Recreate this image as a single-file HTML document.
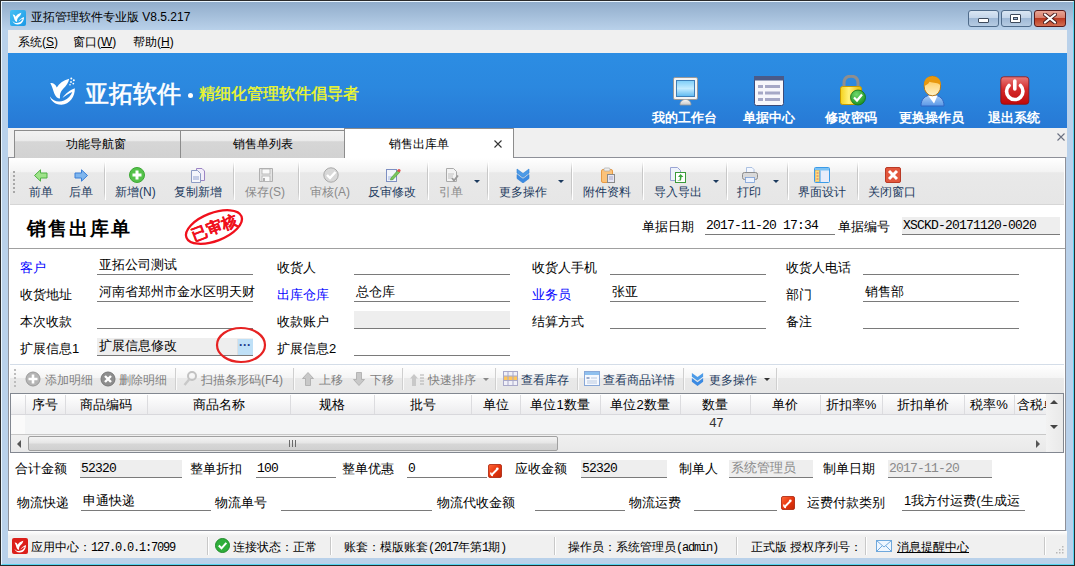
<!DOCTYPE html>
<html><head><meta charset="utf-8">
<style>
*{margin:0;padding:0;box-sizing:border-box}
html,body{width:1075px;height:566px;overflow:hidden;background:#b9d1ea}
body{position:relative;font-family:"Liberation Sans",sans-serif;font-size:12px;color:#000}
.a{position:absolute;white-space:nowrap}
.mono{font-family:"Liberation Mono",monospace;font-size:13px !important;letter-spacing:-0.8px}
/* frame */
#frame{left:0;top:0;width:1075px;height:566px;border:1px solid #2a2a2a;background:#b9d1ea}
#frameIn{left:1px;top:1px;width:1073px;height:564px;border:1px solid #eaf6ff;border-right-color:#55d4f0;border-bottom-color:#55d4f0}
#title{left:2px;top:2px;width:1071px;height:28px;background:linear-gradient(#91adcb,#b9d1ea)}
#menubar{left:8px;top:30px;width:1059px;height:23px;background:#f0f0f0}
#banner{left:8px;top:53px;width:1059px;height:75px;background:linear-gradient(180deg,#2c8de3 0%,#2b88df 45%,#2779d5 100%)}
.wbtn{top:10px;height:17px;border:1px solid #4f6b8a;border-radius:3px;background:linear-gradient(#d9e6f3 0%,#c4d6ea 45%,#9fb9d6 50%,#b6cbe2 100%)}
.wbtn.close{border-color:#5a1a1a;background:linear-gradient(#e8a595 0%,#d9806d 45%,#bb3a22 50%,#d36e52 100%)}
.bnTxt{color:#fff;font-weight:bold;font-size:13px}
#content{left:8px;top:157px;width:1058px;height:374px;background:#fff;border:1px solid #8e9098}
.tab{top:130px;height:28px;border:1px solid #8c8c8c;border-bottom:none;background:linear-gradient(#f2f2f2 0%,#ebebeb 35%,#d6d6d6 40%,#d2d2d2 100%);text-align:center;font-size:12px;line-height:26px;color:#000}

.tb{top:184px;font-size:12px;color:#1c3a5e}
.tb.dis{color:#8a8a8a}
.sep{top:162px;width:1px;height:38px;background:linear-gradient(rgba(200,200,200,0),#c8c8c8 20%,#c8c8c8 80%,rgba(200,200,200,0));box-shadow:1px 0 0 #fff}
.dd{top:180px;width:0;height:0;border-left:3px solid transparent;border-right:3px solid transparent;border-top:3px solid #1c3a5e}
.fld{height:18px;border-bottom:1px solid #7a7a7a;padding-left:2px;font-size:13px;line-height:16px}
.fld.mono{line-height:18px;padding-left:1px}
.fld.gray{background:#eeeeee}
.lbl{font-size:13px}
.blue{color:#0000ff}

.dt{top:372px;font-size:12px;color:#1c3a5e}
.dt.dis{color:#7f7f7f}
.sep2{top:368px;width:1px;height:22px;background:#cfcfcf;box-shadow:1px 0 0 #fafafa}
.gh{top:396px;font-size:13px;text-align:center;line-height:17px}
.gc{top:395px;width:1px;height:19px;background:#dcdcdf}

.st{top:539px;font-size:12px;color:#000}
.sep3{top:537px;width:1px;height:18px;background:#c8c8c8;box-shadow:1px 0 0 #fff}
.mono2{font-family:"Liberation Mono",monospace;font-size:12px;letter-spacing:-1.2px}
</style></head>
<body>
<div class="a" id="frame"></div>
<div class="a" id="frameIn"></div>
<div class="a" id="title"></div>
<!-- title icon -->
<div class="a" style="left:10px;top:10px;width:16px;height:16px;border-radius:2px;background:linear-gradient(135deg,#46c0f4,#1a98e6)"></div>
<svg class="a" style="left:10px;top:10px" width="16" height="16" viewBox="0 0 16 16"><g transform="translate(2.5 1.8) scale(0.46)"><g fill="#fff"><path d="M0.3 6 C3 5.5 5.5 7 6.8 10.5 C9 6.5 13 3.5 19.2 1.8 C18.5 5.5 16.5 9 13 12 C10.5 14.5 9.5 17.5 10 21.5 C7.5 21.5 5.5 19.5 4.3 16.5 C3 13 2 9 0.3 6Z"/><path d="M0 19.5 C3 24.5 9 25.5 14 23.5 C18 22 21 18.5 22.3 15 C19.5 16 15.5 18.5 12.5 21 C15.5 16.5 20.5 12.8 24.8 11.3 C25.3 19.5 19.5 27.6 11.5 27.7 C5 27.8 0.5 23.5 0 19.5Z"/></g></g></svg>
<div class="a" style="left:31px;top:9px;font-size:12px;color:#000">亚拓管理软件专业版 V8.5.217</div>
<div class="a wbtn" style="left:968px;width:31px"></div>
<div class="a wbtn" style="left:1001px;width:31px"></div>
<div class="a wbtn close" style="left:1034px;width:32px"></div>
<div class="a" id="menubar"></div>
<div class="a" style="left:18px;top:34px;font-size:12px">系统(<u>S</u>)</div>
<div class="a" style="left:73px;top:34px;font-size:12px">窗口(<u>W</u>)</div>
<div class="a" style="left:133px;top:34px;font-size:12px">帮助(<u>H</u>)</div>
<div class="a" id="banner"></div>
<div class="a" style="left:85px;top:78px;font-size:24px;color:#fff;-webkit-text-stroke:0.6px #fff">亚拓软件</div>
<div class="a" style="left:188px;top:93px;width:5px;height:5px;border-radius:50%;background:#fff"></div>
<div class="a" style="left:199px;top:84px;font-size:16px;color:#f0f828;-webkit-text-stroke:0.4px #f0f828">精细化管理软件倡导者</div>

<div class="a bnTxt" style="left:652px;top:109px">我的工作台</div>
<div class="a bnTxt" style="left:743px;top:109px">单据中心</div>
<div class="a bnTxt" style="left:825px;top:109px">修改密码</div>
<div class="a bnTxt" style="left:899px;top:109px">更换操作员</div>
<div class="a bnTxt" style="left:988px;top:109px">退出系统</div>

<div class="a" style="left:8px;top:128px;width:1059px;height:29px;background:#f0f0f0"></div>
<svg class="a" style="left:1057px;top:133px" width="8" height="8" viewBox="0 0 8 8"><path d="M0.5 0.5L7.5 7.5M7.5 0.5L0.5 7.5" stroke="#6a7080" stroke-width="1.1"/></svg>
<div class="a" id="content"></div>
<div class="a tab" style="left:14px;width:167px;padding-right:4px">功能导航窗</div>
<div class="a tab" style="left:180px;width:165px">销售单列表</div>
<div class="a tab" style="left:344px;top:128px;width:170px;height:31px;background:#fff;line-height:30px;font-size:12px;text-align:left;padding-left:44px">销售出库单<svg style="position:absolute;left:149px;top:11px" width="8" height="8" viewBox="0 0 8 8"><path d="M0.5 0.5L7.5 7.5M7.5 0.5L0.5 7.5" stroke="#333" stroke-width="1.1"/></svg></div>


<!-- toolbar -->
<div class="a" style="left:10px;top:158px;width:1054px;height:47px;background:linear-gradient(#ffffff 0%,#f3f3f3 30%,#e9e9e9 32%,#e6e6e6 100%);border-bottom:1px solid #d6d6d6"></div>
<div class="a" style="left:13px;top:171px;width:2px;height:22px;background:repeating-linear-gradient(#a8a8a8 0 2px,transparent 2px 4px)"></div>
<div class="a tb" style="left:29px">前单</div>
<div class="a tb" style="left:69px">后单</div>
<div class="a sep" style="left:104px"></div>
<div class="a tb" style="left:115px">新增(N)</div>
<div class="a tb" style="left:174px">复制新增</div>
<div class="a sep" style="left:233px"></div>
<div class="a tb dis" style="left:245px">保存(S)</div>
<div class="a sep" style="left:298px"></div>
<div class="a tb dis" style="left:310px">审核(A)</div>
<div class="a tb" style="left:368px">反审修改</div>
<div class="a sep" style="left:427px"></div>
<div class="a tb dis" style="left:439px">引单</div>
<div class="a dd" style="left:474px"></div>
<div class="a sep" style="left:487px"></div>
<div class="a tb" style="left:499px">更多操作</div>
<div class="a dd" style="left:558px"></div>
<div class="a sep" style="left:571px"></div>
<div class="a tb" style="left:583px">附件资料</div>
<div class="a sep" style="left:642px"></div>
<div class="a tb" style="left:654px">导入导出</div>
<div class="a dd" style="left:713px"></div>
<div class="a sep" style="left:726px"></div>
<div class="a tb" style="left:737px">打印</div>
<div class="a dd" style="left:773px"></div>
<div class="a sep" style="left:787px"></div>
<div class="a tb" style="left:798px">界面设计</div>
<div class="a sep" style="left:857px"></div>
<div class="a tb" style="left:868px">关闭窗口</div>

<!-- header -->
<div class="a" style="left:27px;top:216px;font-size:19px;font-weight:bold;letter-spacing:2px;font-family:'Liberation Serif',serif">销售出库单</div>
<div class="a lbl" style="left:642px;top:218px">单据日期</div>
<div class="a mono fld" style="left:705px;top:217px;width:130px">2017-11-20 17:34</div>
<div class="a lbl" style="left:838px;top:218px">单据编号</div>
<div class="a mono fld gray" style="left:902px;top:217px;width:158px">XSCKD-20171120-0020</div>
<div class="a" style="left:9px;top:248px;width:1056px;height:1px;background:#a0a0a0"></div>

<!-- form rows -->
<div class="a lbl blue" style="left:20px;top:259px">客户</div>
<div class="a fld" style="left:97px;top:257px;width:156px">亚拓公司测试</div>
<div class="a lbl" style="left:277px;top:259px">收货人</div>
<div class="a fld" style="left:354px;top:257px;width:156px"></div>
<div class="a lbl" style="left:532px;top:259px">收货人手机</div>
<div class="a fld" style="left:610px;top:257px;width:156px"></div>
<div class="a lbl" style="left:786px;top:259px">收货人电话</div>
<div class="a fld" style="left:863px;top:257px;width:156px"></div>

<div class="a lbl" style="left:20px;top:286px">收货地址</div>
<div class="a fld" style="left:97px;top:284px;width:156px">河南省郑州市金水区明天财</div>
<div class="a lbl blue" style="left:277px;top:286px">出库仓库</div>
<div class="a fld" style="left:354px;top:284px;width:156px">总仓库</div>
<div class="a lbl blue" style="left:532px;top:286px">业务员</div>
<div class="a fld" style="left:610px;top:284px;width:156px">张亚</div>
<div class="a lbl" style="left:786px;top:286px">部门</div>
<div class="a fld" style="left:863px;top:284px;width:156px">销售部</div>

<div class="a lbl" style="left:20px;top:313px">本次收款</div>
<div class="a fld" style="left:97px;top:311px;width:156px"></div>
<div class="a lbl" style="left:277px;top:313px">收款账户</div>
<div class="a fld gray" style="left:354px;top:311px;width:156px"></div>
<div class="a lbl" style="left:532px;top:313px">结算方式</div>
<div class="a fld" style="left:610px;top:311px;width:156px"></div>
<div class="a lbl" style="left:786px;top:313px">备注</div>
<div class="a fld" style="left:863px;top:311px;width:156px"></div>

<div class="a lbl" style="left:20px;top:340px">扩展信息1</div>
<div class="a fld gray" style="left:97px;top:338px;width:156px">扩展信息修改</div>
<div class="a" style="left:237px;top:339px;width:16px;height:16px;background:#bfe0f7;border-left:1px solid #e0e0e0"></div>
<div class="a" style="left:239px;top:338px;font-size:12px;font-weight:bold;color:#1a3a8a">···</div>
<div class="a lbl" style="left:277px;top:340px">扩展信息2</div>
<div class="a fld" style="left:354px;top:338px;width:156px"></div>
<svg class="a" style="left:214px;top:325px" width="54" height="40" viewBox="0 0 54 40"><ellipse cx="27" cy="20" rx="24" ry="17" fill="none" stroke="#e62222" stroke-width="2.2"/></svg>


<!-- toolbar icons -->
<svg class="a" style="left:34px;top:169px" width="14" height="13" viewBox="0 0 14 13"><path d="M0.5 6.5 L6.5 0.8 V4 H13 V9 H6.5 V12.2Z" fill="#9fe38a" stroke="#4fb043" stroke-width="1"/></svg>
<svg class="a" style="left:74px;top:169px" width="14" height="13" viewBox="0 0 14 13"><path d="M13.5 6.5 L7.5 0.8 V4 H1 V9 H7.5 V12.2Z" fill="#7fb6ee" stroke="#3b7fd6" stroke-width="1"/></svg>
<svg class="a" style="left:129px;top:167px" width="16" height="16" viewBox="0 0 16 16"><circle cx="8" cy="8" r="7.5" fill="#55c24a" stroke="#3ea836"/><path d="M6.5 3.5H9.5V6.5H12.5V9.5H9.5V12.5H6.5V9.5H3.5V6.5H6.5Z" fill="#fff"/></svg>
<svg class="a" style="left:190px;top:167px" width="16" height="16" viewBox="0 0 16 16"><path d="M6.5 1.5H12L14.5 4V13.5H6.5Z" fill="#f2eef9" stroke="#9b84c4"/><path d="M1.5 3.5H7.5L10.5 6.5V15.5H1.5Z" fill="#f4f6fb" stroke="#8d9cc4"/><rect x="3" y="9" width="6" height="4" fill="#c4cde6"/></svg>
<svg class="a" style="left:258px;top:167px" width="16" height="16" viewBox="0 0 16 16"><path d="M1.5 1.5H14.5V14.5H1.5Z" fill="#e4e4e4" stroke="#b0b0b0"/><rect x="4" y="2" width="8" height="5" fill="#fafafa" stroke="#b0b0b0" stroke-width="0.8"/><rect x="4" y="9" width="8" height="5.5" fill="#fafafa" stroke="#b0b0b0" stroke-width="0.8"/><rect x="5" y="11" width="2" height="3" fill="#b0b0b0"/></svg>
<svg class="a" style="left:323px;top:167px" width="16" height="16" viewBox="0 0 16 16"><circle cx="8" cy="8" r="7.2" fill="#d8d8d8" stroke="#a9a9a9"/><path d="M4 8 L7 11 L12.5 5" fill="none" stroke="#fff" stroke-width="2.4"/></svg>
<svg class="a" style="left:385px;top:167px" width="16" height="16" viewBox="0 0 16 16"><rect x="1.5" y="2.5" width="10" height="12" fill="#f2f5fb" stroke="#7d8fc2"/><rect x="3" y="9" width="6" height="4" fill="#cdd7ee"/><path d="M6 11 L13 3 L15 5 L8 12.5 L5.5 13Z" fill="#7ac65c" stroke="#4c9a36" stroke-width="0.6"/><circle cx="14" cy="3.5" r="1.6" fill="#e05050"/></svg>
<svg class="a" style="left:444px;top:167px" width="16" height="16" viewBox="0 0 16 16"><path d="M2.5 1.5H9.5L12.5 4.5V14.5H2.5Z" fill="#f3f3f3" stroke="#aaa"/><path d="M4 7H10M4 9H9M4 11H8" stroke="#c0c0c0"/><path d="M8 11 L10 13.5 L14 8.5" fill="none" stroke="#9a9a9a" stroke-width="1.8"/></svg>
<svg class="a" style="left:515px;top:167px" width="16" height="16" viewBox="0 0 16 16"><path d="M2 2 L8 6.5 L14 2 V6 L8 10.5 L2 6Z" fill="#4c9be8" stroke="#2f7fd4" stroke-width="0.6"/><path d="M2 7.5 L8 12 L14 7.5 V11.5 L8 16 L2 11.5Z" fill="#3b8ae2" stroke="#2f7fd4" stroke-width="0.6"/></svg>
<svg class="a" style="left:600px;top:167px" width="16" height="16" viewBox="0 0 16 16"><rect x="1.5" y="2.5" width="11" height="13" rx="1.5" fill="#fbc27a" stroke="#e79a45"/><rect x="4" y="1" width="6" height="3" rx="1" fill="#eee" stroke="#aaa" stroke-width="0.7"/><rect x="7.5" y="7.5" width="7" height="8" fill="#e6e6f4" stroke="#8a8a8a"/><path d="M9 10H13M9 12H13" stroke="#a9a9c9"/></svg>
<svg class="a" style="left:670px;top:167px" width="16" height="16" viewBox="0 0 16 16"><path d="M0.5 0.5H7.5L10.5 3.5V13.5H0.5Z" fill="#eef2fb" stroke="#9aa4d4"/><rect x="5.5" y="5.5" width="10" height="10" fill="#fff" stroke="#3a9a3a"/><path d="M7.5 13 H9.5 L10 10 H8 L10.5 7 L13.5 10 H11.5 L11 13.5 H8Z" fill="#3aa53a"/></svg>
<svg class="a" style="left:742px;top:167px" width="16" height="16" viewBox="0 0 16 16"><path d="M4.5 0.5H10L12 2.5V6H4.5Z" fill="#f4f8ff" stroke="#9ab4dc" stroke-width="0.8"/><rect x="0.5" y="5.5" width="15" height="7" rx="2" fill="#d9d9d9" stroke="#8c8c8c"/><rect x="3.5" y="10.5" width="9" height="5" fill="#eef4ff" stroke="#7aa0d8" stroke-width="0.8"/></svg>
<svg class="a" style="left:814px;top:167px" width="16" height="16" viewBox="0 0 16 16"><rect x="0.5" y="0.5" width="15" height="15" rx="1" fill="#e8ecfa" stroke="#3b9be8"/><rect x="1" y="1" width="14" height="2.5" fill="#7cc2f4"/><rect x="1.5" y="3.5" width="4" height="11" fill="#ffe07a" stroke="#d9a83a" stroke-width="0.5"/><path d="M2.5 6H4.5M2.5 9H4.5M2.5 12H4.5" stroke="#d66" stroke-width="1"/><path d="M6 3.5V15" stroke="#3b9be8"/></svg>
<svg class="a" style="left:885px;top:167px" width="16" height="16" viewBox="0 0 16 16"><rect x="0.5" y="0.5" width="15" height="15" rx="1.5" fill="#e2563c" stroke="#b93a26"/><path d="M4 4 L12 12 M12 4 L4 12" stroke="#fff" stroke-width="3"/></svg>

<!-- stamp -->
<svg class="a" style="left:180px;top:206px" width="68" height="42" viewBox="0 0 68 42"><g transform="rotate(-21 34 21)"><ellipse cx="34" cy="21" rx="29.5" ry="14" fill="none" stroke="#f0101c" stroke-width="2.3"/><text x="34" y="27" text-anchor="middle" font-size="15.5" font-weight="bold" fill="#f0101c" stroke="#f0101c" stroke-width="0.2" font-family="Liberation Serif,serif">已审核</text></g></svg>

<!-- detail toolbar -->
<div class="a" style="left:10px;top:364px;width:1054px;height:29px;background:linear-gradient(#ffffff 0%,#f5f5f5 45%,#e9e9e9 48%,#e6e6e6 100%);border-top:1px solid #d4dde8"></div>
<div class="a" style="left:14px;top:369px;width:2px;height:20px;background:repeating-linear-gradient(#bdbdbd 0 2px,transparent 2px 4px)"></div>
<svg class="a" style="left:25px;top:371px" width="16" height="16" viewBox="0 0 16 16"><circle cx="8" cy="8" r="7" fill="#b4b4b4" stroke="#9a9a9a"/><path d="M6.7 3.5H9.3V6.7H12.5V9.3H9.3V12.5H6.7V9.3H3.5V6.7H6.7Z" fill="#fff"/></svg>
<div class="a dt dis" style="left:45px">添加明细</div>
<svg class="a" style="left:100px;top:371px" width="16" height="16" viewBox="0 0 16 16"><circle cx="8" cy="8" r="7" fill="#8e8e8e" stroke="#777"/><path d="M5 5L11 11M11 5L5 11" stroke="#fff" stroke-width="2.4"/></svg>
<div class="a dt dis" style="left:119px">删除明细</div>
<div class="a sep2" style="left:175px"></div>
<svg class="a" style="left:183px;top:371px" width="14" height="16" viewBox="0 0 14 16"><circle cx="9" cy="5" r="4" fill="none" stroke="#c2c2c2" stroke-width="2"/><path d="M6.5 8 L1.5 14" stroke="#c8c8c8" stroke-width="2.4"/></svg>
<div class="a dt dis" style="left:201px">扫描条形码(F4)</div>
<div class="a sep2" style="left:293px"></div>
<svg class="a" style="left:302px;top:372px" width="12" height="14" viewBox="0 0 12 14"><path d="M6 0.5 L11.5 6.5 H8.5 V13.5 H3.5 V6.5 H0.5Z" fill="#c8c8c8" stroke="#aaa" stroke-width="0.8"/></svg>
<div class="a dt dis" style="left:319px">上移</div>
<svg class="a" style="left:353px;top:372px" width="12" height="14" viewBox="0 0 12 14"><path d="M6 13.5 L11.5 7.5 H8.5 V0.5 H3.5 V7.5 H0.5Z" fill="#c8c8c8" stroke="#aaa" stroke-width="0.8"/></svg>
<div class="a dt dis" style="left:370px">下移</div>
<div class="a sep2" style="left:402px"></div>
<svg class="a" style="left:410px;top:372px" width="15" height="15" viewBox="0 0 15 15"><path d="M4 2 L8 6.5 H6 V14 H2 V6.5 H0Z" fill="#c8c8c8"/><path d="M10 3H14M10 6H14M10 9H14M10 12H14" stroke="#b0b0b0" stroke-width="1.2"/></svg>
<div class="a dt dis" style="left:428px">快速排序</div>
<div class="a dd" style="left:483px;top:378px;border-top-color:#888"></div>
<div class="a sep2" style="left:495px"></div>
<svg class="a" style="left:503px;top:371px" width="15" height="15" viewBox="0 0 15 15"><rect x="0.5" y="0.5" width="14" height="14" fill="#f0f0f8" stroke="#a9a9c9"/><rect x="1" y="5" width="13" height="4.5" fill="#ffc65a"/><path d="M0.5 5H14.5M0.5 9.5H14.5M5 0.5V14.5M10 0.5V14.5" stroke="#a9a9c9"/></svg>
<div class="a dt" style="left:521px">查看库存</div>
<div class="a sep2" style="left:577px"></div>
<svg class="a" style="left:584px;top:371px" width="16" height="15" viewBox="0 0 16 15"><rect x="0.5" y="0.5" width="15" height="14" fill="#f6f9fe" stroke="#88a8d8"/><rect x="1" y="1" width="14" height="3" fill="#8fc0ee"/><rect x="2.5" y="6" width="3" height="2" fill="#9ac"/><path d="M7 7H13M3 10H13M3 12H13" stroke="#b8c8e0"/></svg>
<div class="a dt" style="left:603px">查看商品详情</div>
<div class="a sep2" style="left:683px"></div>
<svg class="a" style="left:690px;top:371px" width="15" height="15" viewBox="0 0 16 16"><path d="M2 2 L8 6.5 L14 2 V6 L8 10.5 L2 6Z" fill="#4c9be8"/><path d="M2 7.5 L8 12 L14 7.5 V11.5 L8 16 L2 11.5Z" fill="#3b8ae2"/></svg>
<div class="a dt" style="left:709px">更多操作</div>
<div class="a dd" style="left:764px;top:378px;border-top-color:#333"></div>
<div class="a sep2" style="left:776px"></div>

<!-- grid -->
<div class="a" style="left:10px;top:393px;width:1054px;height:60px;border:1px solid #828790;background:#f4f4f4"></div>
<div class="a" style="left:11px;top:394px;width:1036px;height:21px;background:linear-gradient(#ffffff 0%,#f6f6f7 50%,#ececee 100%);border-bottom:1px solid #d8d8dc"></div>
<div class="a" style="left:11px;top:415px;width:14px;height:19px;background:#fafafa"></div>
<div class="a" style="left:25px;top:415px;width:1022px;height:19px;background:#f3f4f5"></div>
<div class="a" style="left:11px;top:434px;width:1036px;height:1px;background:#c8c8c8"></div>

<div class="a gh" style="left:25px;width:40px">序号</div>
<div class="a gc" style="left:65px"></div>
<div class="a gh" style="left:65px;width:82px">商品编码</div>
<div class="a gc" style="left:147px"></div>
<div class="a gh" style="left:147px;width:143px">商品名称</div>
<div class="a gc" style="left:290px"></div>
<div class="a gh" style="left:290px;width:84px">规格</div>
<div class="a gc" style="left:374px"></div>
<div class="a gh" style="left:374px;width:97px">批号</div>
<div class="a gc" style="left:471px"></div>
<div class="a gh" style="left:471px;width:49px">单位</div>
<div class="a gc" style="left:520px"></div>
<div class="a gh" style="left:520px;width:80px">单位1数量</div>
<div class="a gc" style="left:600px"></div>
<div class="a gh" style="left:600px;width:80px">单位2数量</div>
<div class="a gc" style="left:680px"></div>
<div class="a gh" style="left:680px;width:70px">数量</div>
<div class="a gc" style="left:750px"></div>
<div class="a gh" style="left:750px;width:70px">单价</div>
<div class="a gc" style="left:820px"></div>
<div class="a gh" style="left:820px;width:62px">折扣率%</div>
<div class="a gc" style="left:882px"></div>
<div class="a gh" style="left:882px;width:82px">折扣单价</div>
<div class="a gc" style="left:964px"></div>
<div class="a gh" style="left:964px;width:50px">税率%</div>
<div class="a gc" style="left:1014px"></div>
<div class="a gc" style="left:25px"></div>
<div class="a" style="left:1014px;top:396px;width:33px;overflow:hidden;font-size:13px;line-height:17px;padding-left:3px">含税单价</div>

<div class="a mono" style="left:709px;top:416px;color:#333">47</div>
<!-- v scrollbar -->
<div class="a" style="left:1046px;top:394px;width:17px;height:58px;background:linear-gradient(90deg,#f2f2f2,#e9e9e9)"></div>
<div class="a" style="left:1050px;top:400px;width:0;height:0;border-left:4px solid transparent;border-right:4px solid transparent;border-bottom:4px solid #444"></div>
<div class="a" style="left:1050px;top:425px;width:0;height:0;border-left:4px solid transparent;border-right:4px solid transparent;border-top:4px solid #444"></div>
<!-- h scrollbar -->
<div class="a" style="left:11px;top:435px;width:1035px;height:17px;background:linear-gradient(#f0f0f0,#e9e9e9)"></div>
<div class="a" style="left:17px;top:440px;width:0;height:0;border-top:4px solid transparent;border-bottom:4px solid transparent;border-right:4px solid #555"></div>
<div class="a" style="left:1036px;top:440px;width:0;height:0;border-top:4px solid transparent;border-bottom:4px solid transparent;border-left:4px solid #555"></div>
<div class="a" style="left:28px;top:436px;width:530px;height:15px;border:1px solid #a0a0a0;border-radius:2px;background:linear-gradient(#f3f3f3 0%,#e6e6e6 45%,#d6d6d6 55%,#d0d0d0 100%)"></div>
<div class="a" style="left:289px;top:440px;width:8px;height:7px;background:repeating-linear-gradient(90deg,#6a6a6a 0 1px,transparent 1px 3px)"></div>

<!-- summary -->
<div class="a lbl" style="left:15px;top:460px">合计金额</div>
<div class="a mono fld gray" style="left:80px;top:460px;height:18px;width:102px;color:#000">52320</div>
<div class="a lbl" style="left:190px;top:460px">整单折扣</div>
<div class="a mono fld" style="left:256px;top:460px;height:18px;width:80px">100</div>
<div class="a lbl" style="left:342px;top:460px">整单优惠</div>
<div class="a mono fld" style="left:407px;top:460px;height:18px;width:80px">0</div>
<svg class="a" style="left:488px;top:464px" width="14" height="14" viewBox="0 0 14 14"><defs><linearGradient id="rg" x1="0" y1="0" x2="1" y2="1"><stop offset="0" stop-color="#ff6a3a"/><stop offset="0.5" stop-color="#e8360e"/><stop offset="1" stop-color="#c02808"/></linearGradient></defs><rect x="0.5" y="0.5" width="13" height="13" rx="1.5" fill="url(#rg)" stroke="#a82008" stroke-width="0.8"/><path d="M4 10.5 L8.5 6" stroke="#fff" stroke-width="2" stroke-linecap="round"/><path d="M3 8.5 C2.5 10 3.5 11.5 5 11.5" fill="none" stroke="#fff" stroke-width="1.6"/><circle cx="9.3" cy="4.8" r="1.4" fill="#fff"/></svg>
<div class="a lbl" style="left:515px;top:460px">应收金额</div>
<div class="a mono fld gray" style="left:581px;top:460px;height:18px;width:86px">52320</div>
<div class="a lbl" style="left:679px;top:460px">制单人</div>
<div class="a fld gray" style="left:729px;top:460px;height:18px;width:84px;color:#8a8a8a">系统管理员</div>
<div class="a lbl" style="left:823px;top:460px">制单日期</div>
<div class="a mono fld gray" style="left:888px;top:460px;height:18px;width:104px;color:#8a8a8a">2017-11-20</div>

<div class="a lbl" style="left:17px;top:494px">物流快递</div>
<div class="a fld" style="left:81px;top:493px;width:130px">申通快递</div>
<div class="a lbl" style="left:215px;top:494px">物流单号</div>
<div class="a fld" style="left:281px;top:493px;width:151px"></div>
<div class="a lbl" style="left:437px;top:494px">物流代收金额</div>
<div class="a fld" style="left:535px;top:493px;width:90px"></div>
<div class="a lbl" style="left:629px;top:494px">物流运费</div>
<div class="a fld" style="left:694px;top:493px;width:83px"></div>
<svg class="a" style="left:781px;top:496px" width="14" height="14" viewBox="0 0 14 14"><defs><linearGradient id="rg2" x1="0" y1="0" x2="1" y2="1"><stop offset="0" stop-color="#ff6a3a"/><stop offset="0.5" stop-color="#e8360e"/><stop offset="1" stop-color="#c02808"/></linearGradient></defs><rect x="0.5" y="0.5" width="13" height="13" rx="1.5" fill="url(#rg2)" stroke="#a82008" stroke-width="0.8"/><path d="M4 10.5 L8.5 6" stroke="#fff" stroke-width="2" stroke-linecap="round"/><path d="M3 8.5 C2.5 10 3.5 11.5 5 11.5" fill="none" stroke="#fff" stroke-width="1.6"/><circle cx="9.3" cy="4.8" r="1.4" fill="#fff"/></svg>
<div class="a lbl" style="left:807px;top:494px">运费付款类别</div>
<div class="a fld" style="left:902px;top:493px;width:123px">1我方付运费(生成运</div>

<!-- status bar -->
<div class="a" style="left:8px;top:531px;width:1059px;height:27px;background:linear-gradient(#ffffff 0px,#f0f0f0 5px)"></div>
<svg class="a" style="left:12px;top:538px" width="16" height="16" viewBox="0 0 16 16"><rect x="0" y="0" width="16" height="16" rx="2" fill="#dc1f1a"/><g transform="translate(2.5 1.8) scale(0.46)"><g fill="#fff"><path d="M0.3 6 C3 5.5 5.5 7 6.8 10.5 C9 6.5 13 3.5 19.2 1.8 C18.5 5.5 16.5 9 13 12 C10.5 14.5 9.5 17.5 10 21.5 C7.5 21.5 5.5 19.5 4.3 16.5 C3 13 2 9 0.3 6Z"/><path d="M0 19.5 C3 24.5 9 25.5 14 23.5 C18 22 21 18.5 22.3 15 C19.5 16 15.5 18.5 12.5 21 C15.5 16.5 20.5 12.8 24.8 11.3 C25.3 19.5 19.5 27.6 11.5 27.7 C5 27.8 0.5 23.5 0 19.5Z"/></g></g></svg>
<div class="a st" style="left:31px">应用中心：<span class="mono2">127.0.0.1:7099</span></div>
<div class="a sep3" style="left:207px"></div>
<svg class="a" style="left:215px;top:538px" width="15" height="15" viewBox="0 0 15 15"><circle cx="7.5" cy="7.5" r="7" fill="#2fae3a" stroke="#1f8a2a"/><path d="M3.8 7.5 L6.5 10.3 L11.3 4.8" fill="none" stroke="#fff" stroke-width="2"/></svg>
<div class="a st" style="left:233px">连接状态：正常</div>
<div class="a sep3" style="left:330px"></div>
<div class="a st" style="left:344px">账套：模版账套<span class="mono2">(2017</span>年第<span class="mono2">1</span>期<span class="mono2">)</span></div>
<div class="a sep3" style="left:554px"></div>
<div class="a st" style="left:568px">操作员：系统管理员<span class="mono2">(admin)</span></div>
<div class="a sep3" style="left:736px"></div>
<div class="a st" style="left:751px">正式版 授权序列号：</div>
<div class="a sep3" style="left:865px"></div>
<svg class="a" style="left:876px;top:540px" width="16" height="12" viewBox="0 0 16 12"><rect x="0.5" y="0.5" width="15" height="11" fill="#eef6ff" stroke="#6fa8dc"/><path d="M0.5 0.5 L8 7 L15.5 0.5 M0.5 11.5 L6 6 M15.5 11.5 L10 6" fill="none" stroke="#6fa8dc"/></svg>
<div class="a st" style="left:897px;text-decoration:underline;color:#000">消息提醒中心</div>
<div class="a sep3" style="left:1044px"></div>
<svg class="a" style="left:1055px;top:545px" width="10" height="10" viewBox="0 0 10 10"><g fill="#b8b8b8"><rect x="7" y="1" width="1.5" height="1.5"/><rect x="4" y="4" width="1.5" height="1.5"/><rect x="7" y="4" width="1.5" height="1.5"/><rect x="1" y="7" width="1.5" height="1.5"/><rect x="4" y="7" width="1.5" height="1.5"/><rect x="7" y="7" width="1.5" height="1.5"/></g></svg>


<!-- banner logo -->
<svg class="a" style="left:50px;top:77px" width="26" height="28" viewBox="0 0 26 28"><g fill="#fff"><path d="M0.3 6 C3 5.5 5.5 7 6.8 10.5 C9 6.5 13 3.5 19.2 1.8 C18.5 5.5 16.5 9 13 12 C10.5 14.5 9.5 17.5 10 21.5 C7.5 21.5 5.5 19.5 4.3 16.5 C3 13 2 9 0.3 6Z"/><path d="M0 19.5 C3 24.5 9 25.5 14 23.5 C18 22 21 18.5 22.3 15 C19.5 16 15.5 18.5 12.5 21 C15.5 16.5 20.5 12.8 24.8 11.3 C25.3 19.5 19.5 27.6 11.5 27.7 C5 27.8 0.5 23.5 0 19.5Z"/><circle cx="21.3" cy="1.5" r="1"/><circle cx="23.8" cy="3.2" r="1"/><circle cx="21" cy="5" r="0.9"/><circle cx="23.3" cy="6.6" r="0.9"/><circle cx="20" cy="7.8" r="0.8"/></g></svg>
<!-- monitor -->
<svg class="a" style="left:672px;top:76px" width="28" height="30" viewBox="0 0 28 30"><defs><linearGradient id="scr" x1="0" y1="0" x2="0" y2="1"><stop offset="0" stop-color="#7ccdf8"/><stop offset="0.5" stop-color="#c4ecff"/><stop offset="1" stop-color="#5cb8f0"/></linearGradient><linearGradient id="stand" x1="0" y1="0" x2="0" y2="1"><stop offset="0" stop-color="#fafafa"/><stop offset="1" stop-color="#c8c8c8"/></linearGradient></defs><rect x="1.5" y="1.5" width="24" height="22" rx="1.5" fill="#f4f4f4" stroke="#9a9a9a"/><rect x="4.5" y="4.5" width="18" height="16" fill="url(#scr)" stroke="#3d7eb8"/><path d="M8 29 C8 25 11 23.5 13.5 23.5 C16 23.5 19 25 19 29Z" fill="url(#stand)" stroke="#9a9a9a" stroke-width="0.8"/></svg>
<!-- table -->
<svg class="a" style="left:753px;top:75px" width="32" height="32" viewBox="0 0 32 32"><rect x="1.5" y="1.5" width="29" height="29" rx="2" fill="#f7f7fb" stroke="#3b4a78"/><rect x="1" y="1" width="30" height="4.5" fill="#4a5a88"/><g fill="#a6a8c6"><rect x="5" y="10" width="5" height="3"/><rect x="12" y="10" width="15" height="3"/><rect x="5" y="16.5" width="5" height="3"/><rect x="12" y="16.5" width="15" height="3"/><rect x="5" y="23" width="5" height="3"/><rect x="12" y="23" width="15" height="3"/></g></svg>
<!-- lock -->
<svg class="a" style="left:839px;top:75px" width="30" height="32" viewBox="0 0 30 32"><defs><linearGradient id="lk" x1="0" y1="0" x2="1" y2="0"><stop offset="0" stop-color="#f5d11a"/><stop offset="0.4" stop-color="#fff27a"/><stop offset="1" stop-color="#e6b800"/></linearGradient><radialGradient id="gc" cx="0.4" cy="0.3" r="0.8"><stop offset="0" stop-color="#6fd86a"/><stop offset="1" stop-color="#128a1a"/></radialGradient></defs><path d="M5 12 V8 C5 3 8 1.2 12 1.2 C16 1.2 19 3 19 8 V12" fill="none" stroke="#8e8e8e" stroke-width="3"/><rect x="1.5" y="11.5" width="21" height="18" rx="2" fill="url(#lk)" stroke="#c89a00"/><circle cx="19" cy="22.5" r="7.5" fill="url(#gc)" stroke="#0f6f16" stroke-width="0.8"/><path d="M15 22.5 L18 25.5 L23 19.5" fill="none" stroke="#fff" stroke-width="2.2"/></svg>
<!-- person -->
<svg class="a" style="left:920px;top:75px" width="25" height="32" viewBox="0 0 25 32"><defs><linearGradient id="fc" x1="0" y1="0" x2="0" y2="1"><stop offset="0" stop-color="#ffc44a"/><stop offset="1" stop-color="#fff2c8"/></linearGradient><linearGradient id="bd" x1="0" y1="0" x2="0" y2="1"><stop offset="0" stop-color="#a8cdf8"/><stop offset="1" stop-color="#5a98e6"/></linearGradient></defs><path d="M1 31 C1 24 5 20 12.5 20 C20 20 24 24 24 31Z" fill="url(#bd)" stroke="#2f62c0" stroke-width="0.9"/><path d="M8 20.5 L14 28.5 L17.5 20.5Z" fill="#fff"/><ellipse cx="12.4" cy="11" rx="8.3" ry="9.8" fill="url(#fc)" stroke="#b86e00" stroke-width="0.9"/><path d="M4.2 11 C3.5 4 7.5 1.2 12.4 1.2 C17.5 1.2 21.2 4 20.7 10.5 C18.5 7.5 13.5 8.2 9.5 6.8 C8.5 8.8 6.5 10.2 4.2 11Z" fill="#e8980e"/></svg>
<!-- power -->
<svg class="a" style="left:1000px;top:76px" width="30" height="29" viewBox="0 0 30 29"><defs><linearGradient id="pw" x1="0" y1="0" x2="0" y2="1"><stop offset="0" stop-color="#e87b7b"/><stop offset="0.45" stop-color="#d42a2a"/><stop offset="1" stop-color="#c00808"/></linearGradient></defs><rect x="0.8" y="0.8" width="28" height="27.5" rx="3" fill="url(#pw)" stroke="#8c1010" stroke-width="0.8"/><path d="M9 9.5 A8.2 8.2 0 1 0 20.5 9.5" fill="none" stroke="#fff" stroke-width="3.6" stroke-linecap="round"/><path d="M14.8 5 V13" stroke="#fff" stroke-width="3.6" stroke-linecap="round"/></svg>


<!-- window glyphs -->
<div class="a" style="left:978px;top:18px;width:11px;height:5px;background:#fff;border:1px solid #3d4a5c;border-radius:1px"></div>
<div class="a" style="left:1010px;top:14px;width:11px;height:9px;background:#fff;border:1px solid #3d4a5c;border-radius:1px"></div>
<div class="a" style="left:1013px;top:17px;width:5px;height:3px;background:#9fb7d3;border:1px solid #3d4a5c"></div>
<svg class="a" style="left:1043px;top:13px" width="14" height="11" viewBox="0 0 14 11"><path d="M2 1.5 L12 9.5 M12 1.5 L2 9.5" stroke="#4a2020" stroke-width="4" stroke-linecap="round"/><path d="M2 1.5 L12 9.5 M12 1.5 L2 9.5" stroke="#fff" stroke-width="2.2" stroke-linecap="round"/></svg>

</body></html>
